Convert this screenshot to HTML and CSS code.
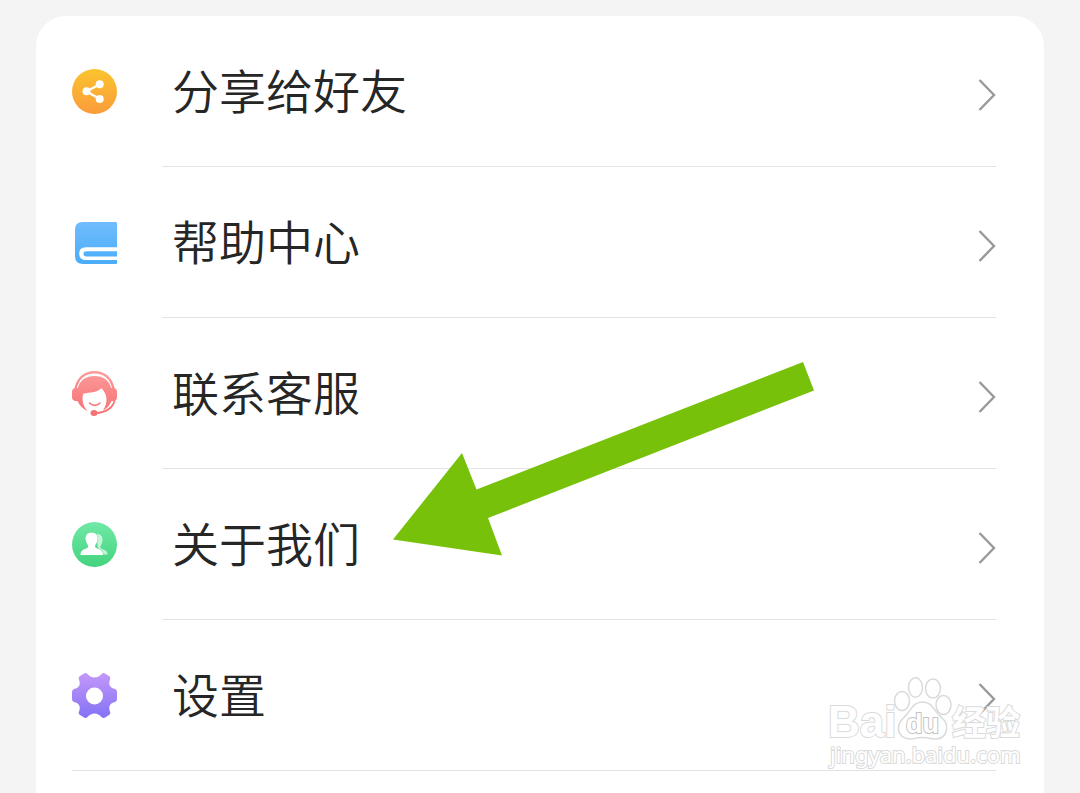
FILE: index.html
```html
<!DOCTYPE html>
<html lang="zh-CN">
<head>
  <meta charset="UTF-8">
  <meta name="viewport" content="width=device-width, initial-scale=1.0">
  <title>我的</title>
  <link rel="stylesheet" href="styles.css">
</head>
<body>
  <main class="page">
    <nav class="menu-card">
      <ul class="menu">
        <li class="menu-item">
          <a href="#share" class="menu-link">
            <svg class="menu-icon" viewBox="0 0 45 45" aria-hidden="true">
              <defs>
                <linearGradient id="orange" x1="0" y1="0" x2="0" y2="1">
                  <stop offset="0" stop-color="#fac42d"/>
                  <stop offset="1" stop-color="#fb9b3c"/>
                </linearGradient>
              </defs>
              <circle cx="22.5" cy="22.5" r="22.5" fill="url(#orange)"/>
              <path d="M27.5 15.5L14.5 22.3L27.5 30" fill="none" stroke="#fff" stroke-width="2.200"/>
              <circle cx="27.7" cy="15.2" r="4" fill="#fff"/>
              <circle cx="14.5" cy="22.3" r="4" fill="#fff"/>
              <circle cx="27.7" cy="30" r="4" fill="#fff"/>
            </svg>
            <span class="menu-body">
              <span class="menu-label">分享给好友</span>
              <svg class="chevron" viewBox="0 0 18 44" aria-hidden="true"><path d="M1.5 13L16 28L1.5 43"/></svg>
            </span>
          </a>
        </li>
        <li class="menu-item">
          <a href="#help" class="menu-link">
            <svg class="menu-icon" viewBox="0 0 45 45" aria-hidden="true">
              <defs>
                <linearGradient id="blue" x1="0" y1="0" x2="0" y2="1">
                  <stop offset="0" stop-color="#71bcfd"/>
                  <stop offset="1" stop-color="#4aadfa"/>
                </linearGradient>
              </defs>
              <path d="M10.5 2H44Q45 2 45 3V43Q45 44 44 44H11Q3 44 3 36V9.500Q3 2 10.500 2Z" fill="url(#blue)"/>
              <path d="M45 27.200H14Q7.200 27.200 7.200 33.500Q7.200 40 14 40H45V36.500H14.500Q11.500 36.500 11.500 33.500Q11.500 31.200 14.500 31.200H45Z" fill="#fff"/>
            </svg>
            <span class="menu-body">
              <span class="menu-label">帮助中心</span>
              <svg class="chevron" viewBox="0 0 18 44" aria-hidden="true"><path d="M1.5 13L16 28L1.5 43"/></svg>
            </span>
          </a>
        </li>
        <li class="menu-item">
          <a href="#service" class="menu-link">
            <svg class="menu-icon" viewBox="0 0 45 45" aria-hidden="true">
              <defs>
                <linearGradient id="red" gradientUnits="userSpaceOnUse" x1="0" y1="0" x2="0" y2="45">
                  <stop offset="0" stop-color="#fd9b9a"/>
                  <stop offset="1" stop-color="#f56e73"/>
                </linearGradient>
              </defs>
              <path d="M3.500 18C5.500 7.500 12.500 1.200 22.500 1.200S39.500 7.500 41.500 18" fill="none" stroke="url(#red)" stroke-width="2.400"/>
              <path d="M0 21Q0 17 4 17H5.800C8 9 14 5 22.500 5S37 9 39.200 17H41Q45 17 45 21V26Q45 30 41 30H39.500C37.500 34.500 35 37.500 31 39.500C33.500 35.500 34.800 31.500 34.500 27.500C34.300 24 32.500 20.500 29.500 17C26 21.500 18 21.500 11.500 22.500C9.500 27.500 10.500 34.500 15.500 40C11 38 7.500 34.500 5.500 30H4Q0 30 0 26Z" fill="url(#red)"/>
              <path d="M17.500 32.200Q22.800 36.500 28 32.200" fill="none" stroke="url(#red)" stroke-width="1.600" stroke-linecap="round"/>
              <path d="M43 28C41.500 36.500 34 41.500 23 42.300" fill="none" stroke="url(#red)" stroke-width="1.800"/>
              <ellipse cx="22" cy="42" rx="3.500" ry="3" fill="url(#red)"/>
            </svg>
            <span class="menu-body">
              <span class="menu-label">联系客服</span>
              <svg class="chevron" viewBox="0 0 18 44" aria-hidden="true"><path d="M1.5 13L16 28L1.5 43"/></svg>
            </span>
          </a>
        </li>
        <li class="menu-item">
          <a href="#about" class="menu-link">
            <svg class="menu-icon" viewBox="0 0 45 45" aria-hidden="true">
              <defs>
                <linearGradient id="green" x1="0" y1="0" x2="0" y2="1">
                  <stop offset="0" stop-color="#70e9a6"/>
                  <stop offset="1" stop-color="#43d37e"/>
                </linearGradient>
              </defs>
              <circle cx="22.5" cy="22.5" r="22.5" fill="url(#green)"/>
              <path d="M24 12C29 11.500 31 15 30.500 19C30.300 22 28 23.500 28.500 25.500C29 28 36 27 35.500 32.500H27Z" fill="#fff" opacity=".65"/>
              <path d="M19.500 10.500C24 10.500 26.200 14 25.500 18C25.200 21 23 22.500 23 24.500C23.500 27.500 31 26 31 33H8.500C8.500 26 16 27.500 16.200 24.500C16.200 22.500 14 21 13.700 18C13 14 15 10.500 19.500 10.500Z" fill="#fff" stroke="#5bdc91" stroke-width="1" paint-order="stroke"/>
            </svg>
            <span class="menu-body">
              <span class="menu-label">关于我们</span>
              <svg class="chevron" viewBox="0 0 18 44" aria-hidden="true"><path d="M1.5 13L16 28L1.5 43"/></svg>
            </span>
          </a>
        </li>
        <li class="menu-item menu-item-last">
          <a href="#settings" class="menu-link">
            <svg class="menu-icon" viewBox="0 0 45 45" aria-hidden="true">
              <defs>
                <linearGradient id="purple" x1="0" y1="0" x2="0" y2="1">
                  <stop offset="0" stop-color="#c398f9"/>
                  <stop offset="1" stop-color="#8472f5"/>
                </linearGradient>
              </defs>
              <path d="M12 .500Q14 -.500 15.500 1Q18.500 4.500 22.500 4.500T29.500 1Q31 -.500 33 .500L37 3Q39 4.500 38 6.500Q36.500 10.500 38 13Q39.500 15.500 43 16Q45 16.500 45 19V26Q45 28.500 43 29Q39.500 29.500 38 32Q36.500 34.500 38 38.500Q39 40.500 37 42L33 44.500Q31 45.500 29.500 44Q26.500 40.500 22.500 40.500T15.500 44Q14 45.500 12 44.500L8 42Q6 40.500 7 38.500Q8.500 34.500 7 32Q5.500 29.500 2 29Q0 28.500 0 26V19Q0 16.500 2 16Q5.500 15.500 7 13Q8.500 10.500 7 6.500Q6 4.500 8 3Z" fill="url(#purple)"/>
              <circle cx="22.5" cy="23" r="8.5" fill="#fff"/>
            </svg>
            <span class="menu-body">
              <span class="menu-label">设置</span>
              <svg class="chevron" viewBox="0 0 18 44" aria-hidden="true"><path d="M1.5 13L16 28L1.5 43"/></svg>
            </span>
          </a>
        </li>
      </ul>

      <!-- pointer to the "about us" row -->
      <svg class="pointer" viewBox="0 0 422 194" aria-hidden="true">
        <path d="M0 177.500L69 91L83.500 127.500L410 0L421 28.500L95 156L109 193.500Z" fill="#78c10b"/>
      </svg>
    </nav>

    <svg class="watermark" viewBox="0 0 200 100" role="img" aria-label="Baidu经验">
      <g class="watermark-mark">
        <ellipse cx="78" cy="28" rx="7.500" ry="9.500"/>
        <ellipse cx="91.500" cy="14.500" rx="7" ry="9.700"/>
        <ellipse cx="109" cy="15.500" rx="7.500" ry="9.500"/>
        <ellipse cx="119.500" cy="32" rx="7.500" ry="9.500"/>
        <path d="M98.500 29C107 29 109 35 114 41C119 46 124 49 122.500 57C121 65 115 67 107 65.500Q98.500 63.500 90 65.500C82 67 76 64 74.500 57C73.500 49 79 46 83 41C88 35 90 29 98.500 29Z"/>
        <text class="mark-latin" x="4" y="64">Bai</text>
        <text class="mark-du" x="82" y="60">du</text>
        <text class="mark-cjk" x="128" y="62">经验</text>
        <text class="mark-url" x="6" y="90">jingyan.baidu.com</text>
      </g>
    </svg>
  </main>
</body>
</html>
```
FILE: styles.css
```css
:root {
  --background: #f4f4f4;
  --card-bg: #ffffff;
  --text: #262626;
  --border: #e3e3e3;
  --chevron: #999999;
}

* {
  margin: 0;
  padding: 0;
  box-sizing: border-box;
}

body {
  background-color: var(--background);
  color: var(--text);
  font-family: "Noto Sans CJK SC", sans-serif;
}

.page {
  position: relative;
  display: flex;
  flex-direction: column;
  min-height: 100vh;
  padding: 16px 36px 0;
}

.menu-card {
  position: relative;
  flex: 1;
  padding: 0 48px 0 36px;
  background-color: var(--card-bg);
  border-radius: 30px 30px 0 0;
}

.menu {
  list-style: none;
}

.menu-link {
  display: flex;
  align-items: center;
  gap: 45px;
  color: inherit;
  text-decoration: none;
}

.menu-icon {
  flex: none;
  width: 45px;
  height: 45px;
}

.menu-body {
  flex: 1;
  display: flex;
  align-items: center;
  justify-content: space-between;
  height: 151px;
  padding: 0 0 4px 10px;
  border-bottom: 1px solid var(--border);
}

.menu-label {
  font-size: 47px;
  font-weight: 350;
  line-height: 64px;
}

.chevron {
  flex: none;
  width: 18px;
  height: 44px;
  fill: none;
  stroke: var(--chevron);
  stroke-width: 2.4;
}

.menu-item-last {
  border-bottom: 1px solid var(--border);
}

.menu-item-last .menu-body {
  height: 150px;
  border-bottom: none;
}

.pointer {
  position: absolute;
  top: 346px;
  left: 357px;
  width: 422px;
  height: 194px;
  pointer-events: none;
}

.watermark {
  position: absolute;
  right: 56px;
  bottom: 20px;
  width: 200px;
  height: 100px;
  overflow: visible;
  pointer-events: none;
}

.watermark-mark {
  fill: rgba(255, 255, 255, 0.6);
  stroke: #dadada;
  stroke-width: 1.5;
}

.watermark-mark text {
  fill: #ffffff;
  stroke: #dadada;
  stroke-width: 2;
  paint-order: stroke;
}

.mark-latin {
  font: bold 44px "Liberation Sans", sans-serif;
}

.watermark-mark .mark-du {
  font: bold 27px "Liberation Sans", sans-serif;
  stroke: #c4c4c4;
}

.mark-cjk {
  font: bold 34px "Noto Sans CJK SC", sans-serif;
}

.mark-url {
  font: 22px "Noto Sans", sans-serif;
}
```
